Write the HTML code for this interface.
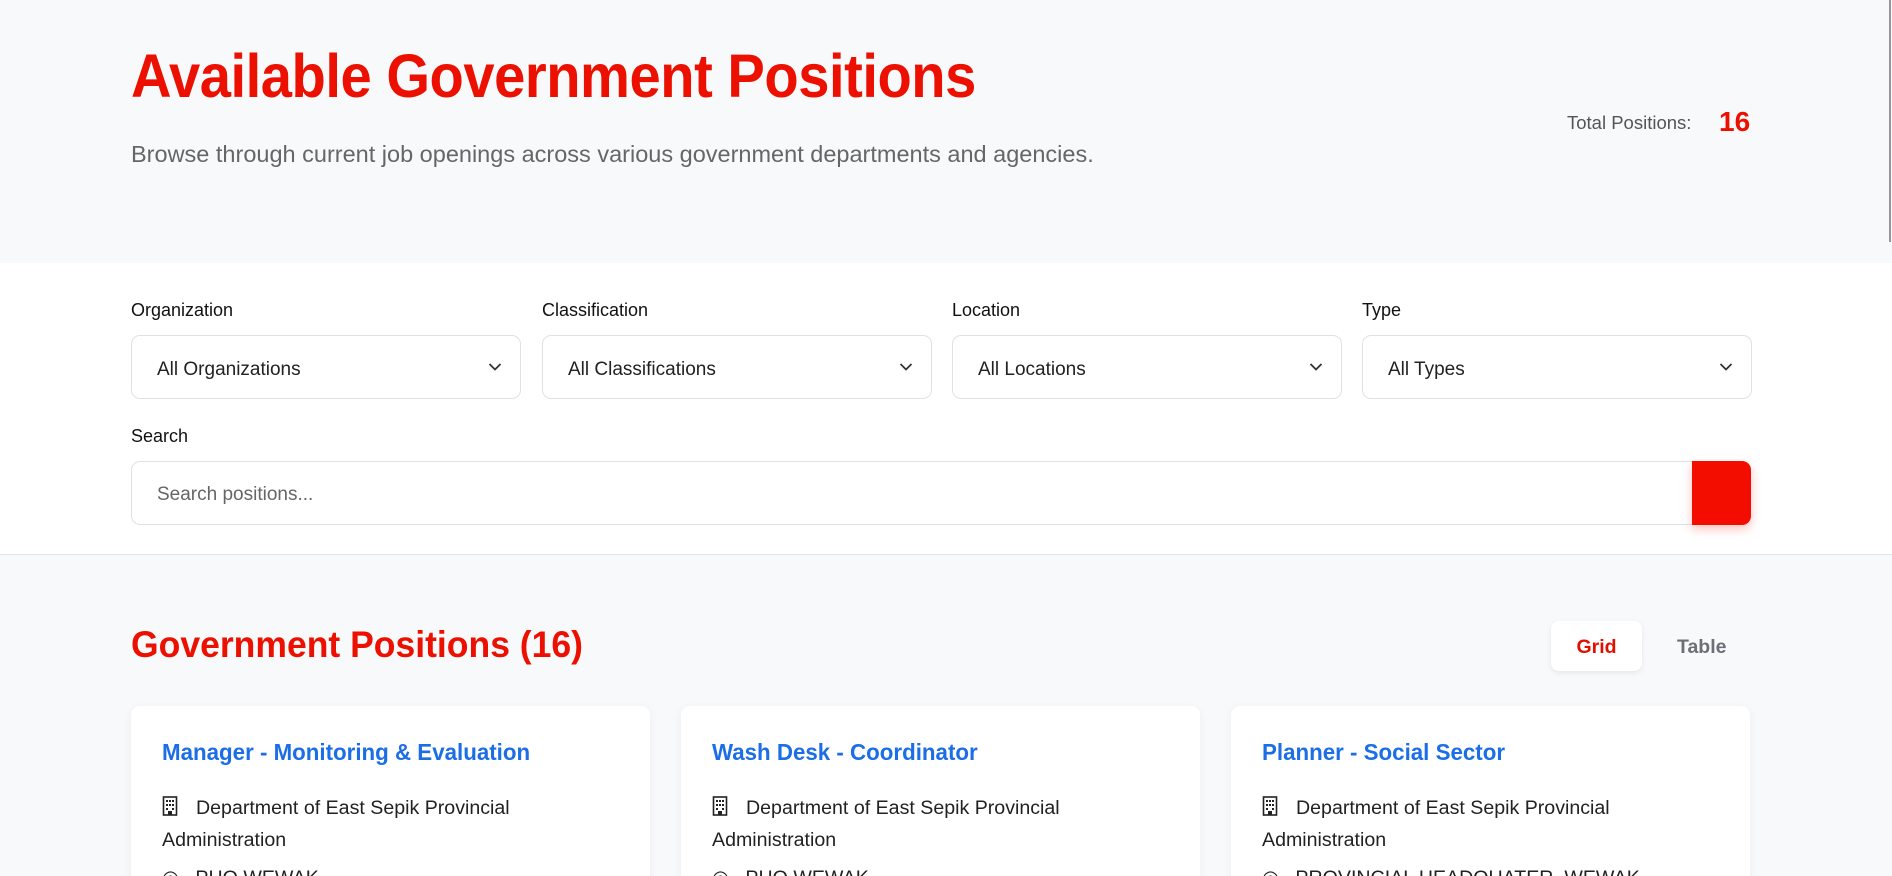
<!DOCTYPE html>
<html><head><meta charset="utf-8"><style>
*{box-sizing:border-box;margin:0;padding:0}
html,body{width:1892px;height:876px;overflow:hidden}
body{font-family:"Liberation Sans",sans-serif;background:#f8f9fb;position:relative;color:#222}
.hdr{position:absolute;left:0;top:0;width:1892px;height:263px;background:#f8f9fb}
.title{position:absolute;left:131px;top:41px;font-size:61px;font-weight:bold;color:#eb1000;white-space:nowrap;transform:scaleX(0.92);transform-origin:left top;letter-spacing:-0.5px}
.sub{position:absolute;left:131px;top:141px;font-size:23.5px;color:#666;white-space:nowrap;font-weight:300}
.tp{position:absolute;left:1567px;top:112px;font-size:18.5px;color:#555}
.tn{position:absolute;left:1719px;top:106px;font-size:28px;font-weight:bold;color:#eb1000}
.sb{position:absolute;left:1889px;top:0;width:2px;height:242px;background:#999}
.flt{position:absolute;left:0;top:263px;width:1892px;height:292px;background:#fff;border-bottom:1px solid #e2e4e8}
.lbl{position:absolute;font-size:18px;color:#111}
.sel{position:absolute;top:335px;width:390px;height:64px;border:1px solid #dfe1e5;border-radius:9px;background:#fff;font-size:19px;color:#222;padding:23px 0 0 25px}
.sel svg{position:absolute;right:18px;top:26px}
.srch{position:absolute;left:131px;top:461px;width:1620px;height:64px;border:1px solid #dfe1e5;border-radius:9px;background:#fff;font-size:19px;color:#666;padding:22px 0 0 25px}
.btn{position:absolute;left:1692px;top:461px;width:59px;height:64px;background:#f20d00;border-radius:0 9px 9px 0;box-shadow:0 4px 10px rgba(242,13,0,.25)}
.st{position:absolute;left:131px;top:624px;font-size:37px;font-weight:bold;color:#eb1000;white-space:nowrap;transform:scaleX(0.96);transform-origin:left top}
.grid{position:absolute;left:1551px;top:621px;width:91px;height:50px;background:#fff;border-radius:8px;box-shadow:0 2px 6px rgba(0,0,0,.08);color:#e01000;font-weight:bold;font-size:19.5px;text-align:center;line-height:52px}
.tbl{position:absolute;left:1677px;top:621px;line-height:52px;color:#6b6f76;font-weight:bold;font-size:19.5px}
.card{position:absolute;top:706px;width:519px;height:200px;background:#fff;border-radius:9px;box-shadow:0 2px 10px rgba(0,0,0,.05)}
.ct{position:absolute;left:31px;top:33px;font-size:23px;font-weight:bold;color:#1b6ee6;white-space:nowrap;transform:scaleX(0.97);transform-origin:left top}
.co{position:absolute;left:31px;top:86px;width:460px;font-size:19.6px;line-height:32px;color:#222}
.co svg{vertical-align:-2px;margin-right:18px}
.cl{position:absolute;left:31px;top:160px;font-size:19.6px;color:#222}
</style></head><body>
<div class="hdr"></div>
<div class="title">Available Government Positions</div>
<div class="sub">Browse through current job openings across various government departments and agencies.</div>
<div class="tp">Total Positions:</div>
<div class="tn">16</div>
<div class="sb"></div>
<div class="flt"></div>
<div class="lbl" style="left:131px;top:300px">Organization</div>
<div class="lbl" style="left:542px;top:300px">Classification</div>
<div class="lbl" style="left:952px;top:300px">Location</div>
<div class="lbl" style="left:1362px;top:300px">Type</div>
<div class="sel" style="left:131px">All Organizations<svg width="14" height="10" viewBox="0 0 14 10"><path d="M1.5 2l5.5 5.5L12.5 2" fill="none" stroke="#333" stroke-width="1.8"/></svg></div>
<div class="sel" style="left:542px">All Classifications<svg width="14" height="10" viewBox="0 0 14 10"><path d="M1.5 2l5.5 5.5L12.5 2" fill="none" stroke="#333" stroke-width="1.8"/></svg></div>
<div class="sel" style="left:952px">All Locations<svg width="14" height="10" viewBox="0 0 14 10"><path d="M1.5 2l5.5 5.5L12.5 2" fill="none" stroke="#333" stroke-width="1.8"/></svg></div>
<div class="sel" style="left:1362px">All Types<svg width="14" height="10" viewBox="0 0 14 10"><path d="M1.5 2l5.5 5.5L12.5 2" fill="none" stroke="#333" stroke-width="1.8"/></svg></div>
<div class="lbl" style="left:131px;top:426px">Search</div>
<div class="srch">Search positions...</div>
<div class="btn"></div>
<div class="st">Government Positions (16)</div>
<div class="grid">Grid</div>
<div class="tbl">Table</div>

<div class="card" style="left:131px"><div class="ct">Manager - Monitoring &amp; Evaluation</div>
<div class="co"><svg width="16" height="20" viewBox="0 0 16 20"><rect x="1.5" y="1" width="13" height="18" fill="none" stroke="#222" stroke-width="1.6"/><g fill="#222"><rect x="4" y="4" width="2" height="2"/><rect x="7" y="4" width="2" height="2"/><rect x="10" y="4" width="2" height="2"/><rect x="4" y="8" width="2" height="2"/><rect x="7" y="8" width="2" height="2"/><rect x="10" y="8" width="2" height="2"/><rect x="4" y="12" width="2" height="2"/><rect x="10" y="12" width="2" height="2"/><rect x="6" y="15" width="4" height="4"/></g></svg>Department of East Sepik Provincial Administration</div>
<div class="cl">◎&nbsp;&nbsp;&nbsp;PHQ WEWAK</div></div>

<div class="card" style="left:681px"><div class="ct">Wash Desk - Coordinator</div>
<div class="co"><svg width="16" height="20" viewBox="0 0 16 20"><rect x="1.5" y="1" width="13" height="18" fill="none" stroke="#222" stroke-width="1.6"/><g fill="#222"><rect x="4" y="4" width="2" height="2"/><rect x="7" y="4" width="2" height="2"/><rect x="10" y="4" width="2" height="2"/><rect x="4" y="8" width="2" height="2"/><rect x="7" y="8" width="2" height="2"/><rect x="10" y="8" width="2" height="2"/><rect x="4" y="12" width="2" height="2"/><rect x="10" y="12" width="2" height="2"/><rect x="6" y="15" width="4" height="4"/></g></svg>Department of East Sepik Provincial Administration</div>
<div class="cl">◎&nbsp;&nbsp;&nbsp;PHQ WEWAK</div></div>

<div class="card" style="left:1231px"><div class="ct">Planner - Social Sector</div>
<div class="co"><svg width="16" height="20" viewBox="0 0 16 20"><rect x="1.5" y="1" width="13" height="18" fill="none" stroke="#222" stroke-width="1.6"/><g fill="#222"><rect x="4" y="4" width="2" height="2"/><rect x="7" y="4" width="2" height="2"/><rect x="10" y="4" width="2" height="2"/><rect x="4" y="8" width="2" height="2"/><rect x="7" y="8" width="2" height="2"/><rect x="10" y="8" width="2" height="2"/><rect x="4" y="12" width="2" height="2"/><rect x="10" y="12" width="2" height="2"/><rect x="6" y="15" width="4" height="4"/></g></svg>Department of East Sepik Provincial Administration</div>
<div class="cl">◎&nbsp;&nbsp;&nbsp;PROVINCIAL HEADQUATER, WEWAK</div></div>
</body></html>
